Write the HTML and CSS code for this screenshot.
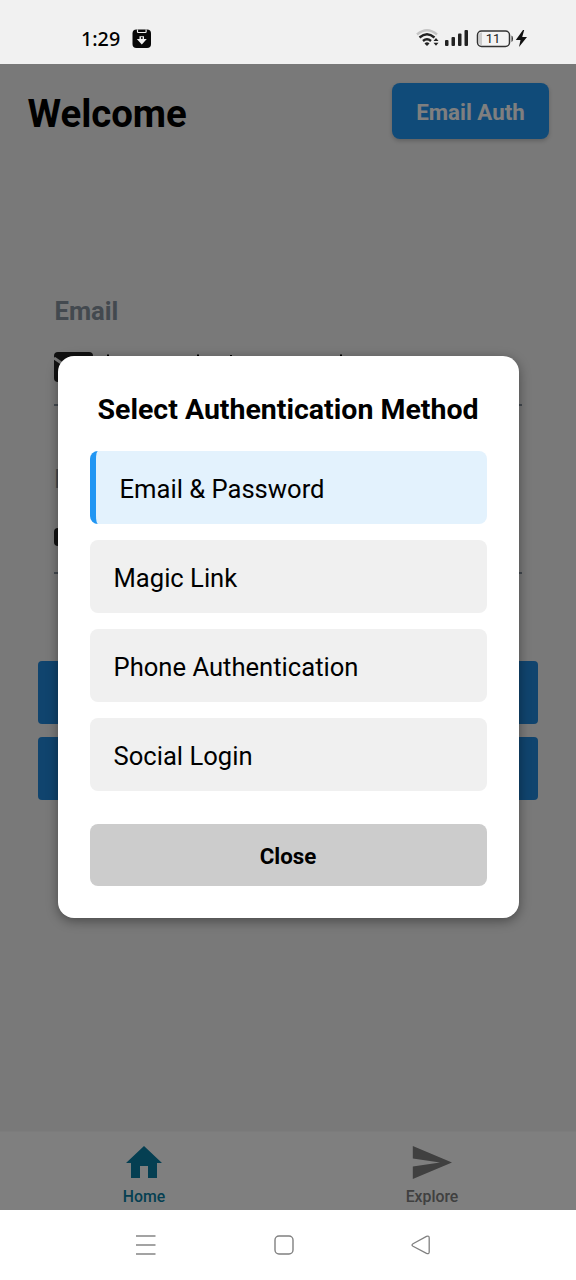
FILE: index.html
```html
<!DOCTYPE html>
<html lang="en">
<head>
<meta charset="utf-8">
<title>Welcome</title>
<link rel="stylesheet" href="styles.css">
</head>
<body>
<div class="phone">
  <header class="status">
    <span class="clock">1:29</span>
    <svg class="notif" width="20" height="20" viewBox="0 0 20 20"><rect x=".5" y=".5" width="18.500" height="18.500" rx="4" fill="#080808"/><path d="M5.5.500v2.200q0 .8.8.8h7q.8 0 .8-.8V.500" fill="none" stroke="#f1f1f1" stroke-width="1.200"/><path d="M7.500 10V7.200h4.500V10h2.800l-5 5.500L4.800 10z" fill="#f1f1f1"/><circle cx="9.800" cy="9" r="1" fill="#080808"/></svg>
    <span class="spacer"></span>
    <svg class="signals" width="112" height="24" viewBox="0 0 112 24">
      <g fill="none" stroke="#222" stroke-width="2.400">
        <path d="M1 7.500Q11-1 21 7.500" stroke="#c5c5c5"/><path d="M3.500 10.500Q11 4 18.500 10.500"/><path d="M7 14Q11 10.500 15 14"/>
      </g>
      <path d="M8.500 16.500a3.500 3.500 0 0 1 5 0L11 19zM17.500 14l2.500-3 2.500 3zM17.500 15.700l2.500 3 2.500-3z" fill="#222"/>
      <g fill="#222"><rect x="29" y="13" width="3.500" height="6" rx="1"/><rect x="35.500" y="10" width="3.500" height="9" rx="1"/><rect x="42" y="6.500" width="3.500" height="12.500" rx="1"/><rect x="48.500" y="3" width="3.500" height="16" rx="1"/></g>
      <rect x="61.500" y="4" width="32" height="15.500" rx="4" fill="#f3f3f3" stroke="#333" stroke-width="1.500"/>
      <path d="M66 5.500h-1q-2 0-2 2.500v7.500q0 2.500 2 2.500h1z" fill="#ccc"/>
      <path d="M95.500 8.500q1.500.5 1.500 3.200t-1.500 3.200z" fill="#333"/>
      <text class="charge" x="77" y="16.300" text-anchor="middle">11</text>
      <path d="M107 3l-7.200 10h4.700l-1.500 7 8-10h-4.800l2-7z" fill="#111"/>
    </svg>
  </header>

  <main class="app">
    <div class="heading">
      <h1>Welcome</h1>
      <span class="method">Email Auth</span>
    </div>
    <form class="form">
      <div class="field">
        <span class="label">Email</span>
        <div class="input">
          <svg width="300" height="34" viewBox="0 0 300 34"><rect x="0" y="2" width="39" height="30" rx="4" fill="#222"/><path d="M0 8l19 13 19-13" fill="none" stroke="#f2f2f2" stroke-width="3"/><path d="M53 4.500h2V10h-2zM143 4.500h2V10h-2zM176 5h2v6h-2zM286 4.500h2V10h-2z" fill="#000"/></svg>
        </div>
      </div>
      <div class="field">
        <span class="label">P</span>
        <div class="input">
          <svg width="38" height="34" viewBox="0 0 38 34"><path d="M7 10V7a8 8 0 0 1 16 0v3" fill="none" stroke="#222" stroke-width="4"/><rect x="0" y="10" width="30" height="18" rx="4" fill="#222"/></svg>
        </div>
      </div>
      <div class="actions"><span class="action"></span><span class="action"></span></div>
    </form>
    <nav class="tabs">
      <span class="tab active">
        <svg width="38" height="34" viewBox="0 0 38 34"><path d="M19 0L1 17h5v15h9V20h8v12h9V17h5z" fill="currentColor"/></svg>
        Home
      </span>
      <span class="tab">
        <svg width="40" height="34" viewBox="0 0 40 34"><path d="M.8 0L40 16.500.8 33V20.500L28 16.500.8 12.500z" fill="currentColor"/></svg>
        Explore
      </span>
    </nav>
    <div class="backdrop">
      <section class="modal">
        <h2>Select Authentication Method</h2>
        <ul class="options">
          <li class="option selected">Email &amp; Password</li>
          <li class="option">Magic Link</li>
          <li class="option">Phone Authentication</li>
          <li class="option">Social Login</li>
        </ul>
        <div class="close">Close</div>
      </section>
    </div>
  </main>

  <footer class="system">
    <svg width="20" height="22" viewBox="0 0 20 22"><path d="M0 2h19.500M0 11h19.500M0 20h19.500" stroke="#858585" stroke-width="1.600"/></svg>
    <svg width="20" height="22" viewBox="0 0 20 22"><rect x="1" y="2" width="18" height="18" rx="4" fill="none" stroke="#808080" stroke-width="1.400"/></svg>
    <svg width="20" height="22" viewBox="0 0 20 22"><path d="M2 9.700L15.500 2.400q2.700-1 2.700 1.500v14q0 2.500-2.700 1.500L2 12.200q-2-1.200 0-2.500z" fill="none" stroke="#808080" stroke-width="1.300"/></svg>
  </footer>
</div>
</body>
</html>
```
FILE: styles.css
```css
* { box-sizing: border-box; }
body { margin: 0; font-family: Roboto, sans-serif; color: #000; }
h1, h2, ul { margin: 0; padding: 0; }
svg { display: block; flex: none; }
.phone { width: 576px; height: 1280px; display: flex; flex-direction: column; overflow: hidden; }
.status { height: 64px; flex: none; background: #f1f1f1; display: flex; align-items: center; padding: 13px 48px 0 81px; }
.clock { font: 500 19.7px/24px "Noto Sans", sans-serif; width: 51px; }
.spacer { flex: 1; }
.charge { font: 400 13px Roboto, sans-serif; fill: #222; }
.app { position: relative; flex: 1; display: flex; flex-direction: column; background: #f2f2f2; min-height: 0; }
.heading { display: flex; align-items: center; justify-content: space-between; padding: 19px 27px 0 27.5px; }
h1 { font-size: 38.4px; line-height: 50px; padding-top: 6px; font-weight: 700; letter-spacing: -.05px; }
.method { width: 157px; height: 56px; border-radius: 8px; background: #2196f3; color: #fff; font-size: 22.3px; line-height: 58px; font-weight: 700; text-align: center; box-shadow: 0 2px 4px rgba(0,0,0,.2); }
.form { flex: 1; padding: 157px 38px 0; }
.field { margin: 0 16px; height: 168px; }
.label { display: block; padding-left: .5px; font-size: 25.6px; line-height: 30px; font-weight: 700; color: #86939e; }
.input { margin-top: 24px; height: 56px; border-bottom: 2px solid #86939e; }
.actions { display: flex; flex-direction: column; gap: 13px; margin-top: 29px; }
.action { height: 63px; border-radius: 4px; background: #2089dc; }
.tabs { height: 79px; display: flex; background: #fff; border-top: 1px solid #f8f8f8; }
.tab { flex: 1; display: flex; flex-direction: column; align-items: center; padding-top: 14px; gap: 7px; font-size: 15.8px; line-height: 20px; font-weight: 500; color: #808080; }
.active { color: #0a7ea4; }
.backdrop { position: absolute; inset: 0; display: flex; align-items: center; justify-content: center; background: rgba(0,0,0,.5); }
.modal { width: 461px; height: 562px; padding: 32px; border-radius: 16px; background: #fff; box-shadow: 0 3px 12px rgba(0,0,0,.4); }
h2 { font-size: 28.5px; line-height: 43px; font-weight: 700; text-align: center; white-space: nowrap; margin: 0 -10px 20px; }
.options { list-style: none; display: grid; gap: 16px; }
.option { height: 73px; border-radius: 8px; padding: 0 24px; background: #f0f0f0; font-size: 25.6px; line-height: 77px; }
.selected { border-left: 6.4px solid #2196f3; background: #e3f2fd; }
.close { margin-top: 32.5px; height: 62px; border-radius: 8px; background: #ccc; font-size: 22.3px; line-height: 65px; font-weight: 700; text-align: center; }
.system { flex: none; height: 70px; display: flex; justify-content: space-between; align-items: center; padding: 0 145px 0 136px; }
```
